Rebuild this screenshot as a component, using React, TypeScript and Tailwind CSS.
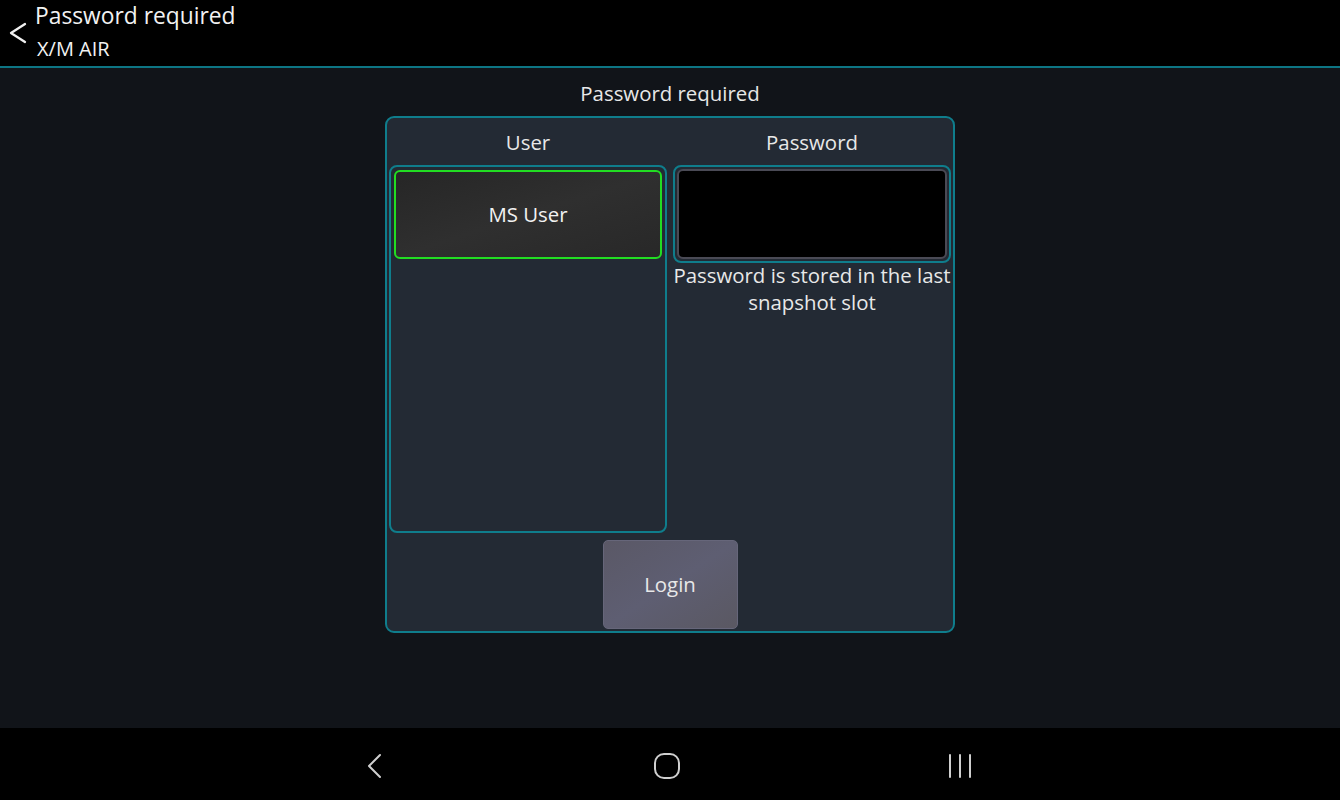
import React from 'react';

const font = { fontFamily: '"Open Sans", "Noto Sans", sans-serif' };

export default function App() {
  return (
    <div className="w-[1340px] h-[800px] flex flex-col bg-[#111419] text-[#e6e6e6] overflow-hidden" style={font}>
      {/* top bar */}
      <div className="h-[68px] shrink-0 bg-black border-b-2 border-[#0d7584] flex items-start">
        <div className="w-[35px] h-full flex items-center justify-center pb-[1px]">
          <svg width="20" height="22" viewBox="0 0 20 22" fill="none" stroke="#f0f0f0" strokeWidth="2.3" strokeLinecap="round" strokeLinejoin="round">
            <path d="M17 2 L3 11 L17 20" />
          </svg>
        </div>
        <div className="flex flex-col">
          <span className="text-[22.8px] leading-[32px] text-[#f2f2f2]">Password required</span>
          <span className="text-[20px] leading-[30px] text-[#f2f2f2] pl-[2px] mt-[2px]">X/M AIR</span>
        </div>
      </div>

      {/* content */}
      <div className="flex-1 flex flex-col items-center pt-[12px]">
        <div className="text-[20.4px] leading-[26px] text-[#e8e8e8]">Password required</div>
        <div className="mt-[10px] w-[570px] h-[517px] rounded-[9px] border-2 border-[#0f7d8c] bg-[#232a34] flex flex-col p-[2px]">
          <div className="flex gap-[6px] flex-1">
            {/* user column */}
            <div className="flex-1 flex flex-col">
              <div className="h-[45px] flex items-center justify-center text-[20.4px] text-[#e8e8e8]">User</div>
              <div className="flex-1 rounded-[8px] border-2 border-[#0f7d8c] p-[3px]">
                <div className="h-[89px] rounded-[6px] border-2 border-[#22dd22] bg-gradient-to-br from-[#262626] via-[#2f2f2f] to-[#282828] flex items-center justify-center text-[20.4px] text-[#f2f2f2]">
                  MS User
                </div>
              </div>
            </div>
            {/* password column */}
            <div className="flex-1 flex flex-col">
              <div className="h-[45px] flex items-center justify-center text-[20.4px] text-[#e8e8e8]">Password</div>
              <div className="h-[98px] rounded-[8px] border-2 border-[#0f7d8c] p-[2px]">
                <div className="h-full rounded-[6px] border-2 border-[#4a4a55] bg-black" />
              </div>
              <div className="-mt-[1px] text-center text-[20.4px] leading-[27px] text-[#e8e8e8] whitespace-nowrap">
                Password is stored in the last
                <br />
                snapshot slot
              </div>
            </div>
          </div>
          <div className="h-[96px] flex items-start justify-center pt-[7px]">
            <button className="w-[135px] h-[89px] rounded-[5px] border border-[#66667a] bg-gradient-to-br from-[#5a5866] via-[#5e5e72] to-[#5a5862] text-[20.4px] text-[#e8e8e8]">
              Login
            </button>
          </div>
        </div>
      </div>

      {/* nav bar */}
      <div className="h-[72px] shrink-0 bg-black flex items-center justify-center pt-[4px]">
        <div className="flex items-center gap-[233px] mr-[6px]">
          <div className="w-[60px] flex justify-center">
            <svg width="18" height="26" viewBox="0 0 18 26" fill="none" stroke="#cfcfcf" strokeWidth="2" strokeLinecap="round" strokeLinejoin="round">
              <path d="M15 2 L4 13 L15 24" />
            </svg>
          </div>
          <div className="w-[60px] flex justify-center">
            <svg width="28" height="28" viewBox="0 0 28 28" fill="none" stroke="#cfcfcf" strokeWidth="2">
              <rect x="2" y="2" width="24" height="24" rx="9" />
            </svg>
          </div>
          <div className="w-[60px] flex justify-center">
            <svg width="24" height="28" viewBox="0 0 24 28" fill="none" stroke="#cfcfcf" strokeWidth="2" strokeLinecap="round">
              <path d="M2 3 V25 M12 3 V25 M22 3 V25" />
            </svg>
          </div>
        </div>
      </div>
    </div>
  );
}
